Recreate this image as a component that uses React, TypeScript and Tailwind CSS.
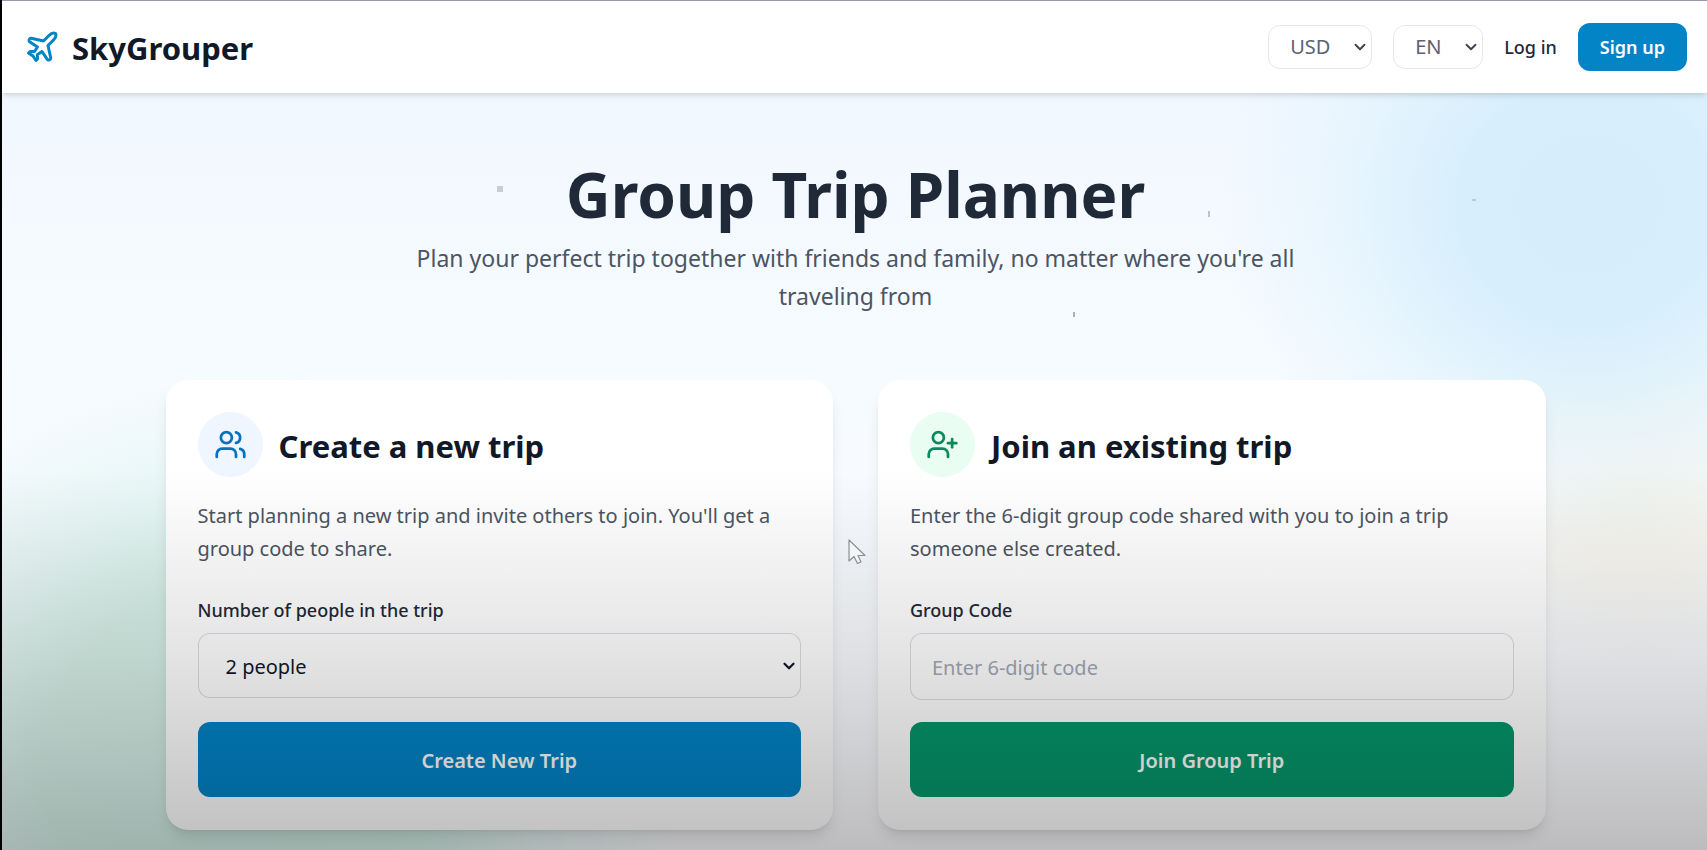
import { useState } from "react";
import type { ReactNode } from "react";
import { ChevronDown, Plane, UserPlus, Users } from "lucide-react";

function HeaderSelect({ label, options }: { label: string; options: string[] }) {
  return (
    <div className="relative flex items-center text-[#5b6270]">
      <select
        aria-label={label}
        className="h-11 appearance-none rounded-xl border border-gray-200 bg-white pr-10 pl-[21px] text-xl"
      >
        {options.map((o) => (
          <option key={o}>{o}</option>
        ))}
      </select>
      <ChevronDown size={18} strokeWidth={2.4} className="pointer-events-none absolute right-[3px] text-gray-700" />
    </div>
  );
}

function Header() {
  return (
    <header className="relative z-10 flex h-[93px] items-center justify-between border-t border-[#9a98a8] bg-white pr-5 pl-[22px] shadow-md">
      <a href="#" className="flex items-center gap-3 text-[#111827]">
        <Plane size={36} className="text-[#0284c7]" />
        <span className="pt-[2px] text-[31px] leading-9 font-bold">SkyGrouper</span>
      </a>
      <nav className="flex items-center gap-[21px]">
        <HeaderSelect label="Currency" options={["USD", "EUR", "GBP"]} />
        <HeaderSelect label="Language" options={["EN", "ES", "FR"]} />
        <a href="#login" className="text-lg font-medium text-[#1f2937]">
          Log in
        </a>
        <button type="button" className="h-12 rounded-xl bg-[#0284c7] px-[22px] text-lg font-semibold text-white">
          Sign up
        </button>
      </nav>
    </header>
  );
}

function TripCard({
  icon,
  iconClass,
  title,
  text,
  children,
}: {
  icon: ReactNode;
  iconClass: string;
  title: string;
  text: string;
  children: ReactNode;
}) {
  return (
    <section className="flex flex-1 flex-col rounded-[22px] bg-white p-8 pb-[33px] shadow-lg">
      <div className="flex items-center gap-4">
        <div className={`flex size-[65px] shrink-0 items-center justify-center rounded-full ${iconClass}`}>{icon}</div>
        <h2 className="pt-[2px] text-[31px] leading-9 font-bold text-[#111827]">{title}</h2>
      </div>
      <p className="mt-[22px] text-xl leading-[33px] text-[#4b5563]">{text}</p>
      {children}
    </section>
  );
}

function Backdrop() {
  return (
    <div className="pointer-events-none absolute inset-0 bg-[radial-gradient(ellipse_370px_350px_at_93%_24%,#d6eefb_0%,#d7effc_35%,#e2f3fd99_68%,#eff8fe00_100%),radial-gradient(ellipse_210px_190px_at_96%_56%,#f6f4ea_0%,#f8f5ec99_50%,#faf7f000_100%),radial-gradient(ellipse_440px_400px_at_14%_90%,#d2eee6_0%,#d6f0e8_45%,#e0f5f2aa_70%,#effaf900_100%),linear-gradient(180deg,#eff6ff_0%,#f6fbff_40%,#fbfbfe_100%)]">
      <span className="absolute top-[186px] left-[495px] size-[6px] bg-[#c9cdd2]" />
      <span className="absolute top-[211px] left-[1206px] h-[6px] w-[2px] bg-[#bcc3ca]" />
      <span className="absolute top-[312px] left-[1071px] h-[5px] w-[2px] bg-[#a9b1b8]" />
      <span className="absolute top-[199px] left-[1470px] h-[2px] w-[4px] bg-[#b9cad4]" />
    </div>
  );
}

export default function App() {
  const [code, setCode] = useState("");
  return (
    <div className="relative flex min-h-screen flex-col overflow-hidden border-l-2 border-black bg-[#f5faff] font-['Noto_Sans','Open_Sans',sans-serif]">
      <Backdrop />
      <Header />
      <main className="relative w-full flex-1 pt-[62px] pb-5 pl-[2px]">
        <div className="mx-auto max-w-[915px] text-center">
          <h1 className="text-[62px] leading-[78px] font-bold text-[#1f2937]">Group Trip Planner</h1>
          <p className="mt-[6px] text-[23px] leading-[38px] text-[#4b5563]">
            Plan your perfect trip together with friends and family, no matter where you're all traveling from
          </p>
        </div>
        <div className="mx-auto mt-[65px] flex max-w-[1380px] gap-[45px]">
          <TripCard
            icon={<Users size={33} />}
            iconClass="bg-[#eff6ff] text-[#0873bd]"
            title="Create a new trip"
            text="Start planning a new trip and invite others to join. You'll get a group code to share."
          >
            <form className="mt-8 flex flex-col" onSubmit={(e) => e.preventDefault()}>
              <label htmlFor="people" className="text-lg leading-[26px] font-medium text-[#1f2937]">
                Number of people in the trip
              </label>
              <div className="relative mt-[10px] h-[67px]">
                <select
                  id="people"
                  className="h-[65px] w-full appearance-none rounded-xl border border-gray-300/80 bg-white px-[27px] pt-[2px] text-xl text-[#111827]"
                >
                  <option>2 people</option>
                  <option>3 people</option>
                  <option>4 people</option>
                </select>
                <ChevronDown
                  size={18}
                  strokeWidth={3}
                  className="pointer-events-none absolute top-6 right-[3px] text-[#111827]"
                />
              </div>
              <button type="submit" className="mt-[22px] h-[75px] rounded-xl bg-[#0284c7] pt-[2px] text-xl font-semibold text-white">
                Create New Trip
              </button>
            </form>
          </TripCard>
          <TripCard
            icon={<UserPlus size={33} />}
            iconClass="bg-[#eafdf3] text-[#0b8a61]"
            title="Join an existing trip"
            text="Enter the 6-digit group code shared with you to join a trip someone else created."
          >
            <form className="mt-8 flex flex-col" onSubmit={(e) => e.preventDefault()}>
              <label htmlFor="code" className="text-lg leading-[26px] font-medium text-[#1f2937]">
                Group Code
              </label>
              <input
                id="code"
                value={code}
                onChange={(e) => setCode(e.target.value)}
                maxLength={6}
                placeholder="Enter 6-digit code"
                className="mt-[10px] h-[67px] rounded-xl border border-gray-300/80 bg-white px-[21px] pt-[2px] text-xl placeholder:text-[#a3a8b3]"
              />
              <button type="submit" className="mt-[22px] h-[75px] rounded-xl bg-[#059669] pt-[2px] text-xl font-semibold text-white">
                Join Group Trip
              </button>
            </form>
          </TripCard>
        </div>
      </main>
      <div className="pointer-events-none absolute inset-x-0 bottom-0 h-[380px] bg-linear-to-b from-transparent via-black/11 to-black/25" />
      <svg className="pointer-events-none absolute top-[539px] left-[846px]" width="20" height="27" viewBox="0 0 20 27" aria-hidden="true">
        <path
          d="M1 1v21l5-4.500 3.500 7 3.500-1.500-3-6.500h7z"
          fill="#f4f5f7"
          stroke="#8b8f94"
          strokeWidth="1.200"
          strokeLinejoin="round"
        />
      </svg>
    </div>
  );
}
